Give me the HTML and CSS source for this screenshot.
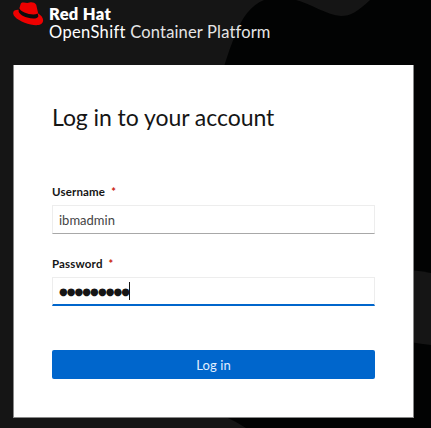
FILE: index.html
```html
<!DOCTYPE html>
<html lang="en">
<head>
<meta charset="utf-8">
<title>Log in</title>
<link rel="stylesheet" href="styles.css">
</head>
<body>
<svg class="backdrop" viewBox="0 0 431 428" aria-hidden="true">
  <path fill="#020303" d="M264 0C251 5 242 18 236 33C229 50 226 60 220 80V417H226Q237 422 246 428H431V0H370C357 12 351 16 341 16C327 15 311 4 296 0Z"/>
  <path fill="#151515" d="M410 270Q421 271 431 273V345Q421 344 410 342Z"/>
</svg>
<header class="brand">
  <svg class="hat" viewBox="0 0 31 24" aria-hidden="true">
    <path fill="#e00" d="M7.5 2.4C8 .8 9.1.2 10.8.6L14.3.9L17.6.3C19.5.1 22.4.9 23.2 2.8L25.2 11.5C28.5 13.3 30.6 16.5 30 19.3C29.2 23.4 23.5 24 17.6 22.4C9.5 20.6 1 16.2.2 11.7C-.3 8.8 2.5 7.6 5.9 7.9Z"/>
    <path fill="#0c0c0c" d="M6.2 6.2C7.4 10 19.5 14.3 24.7 11.5L25.4 14.2C24.5 17 19.6 17.1 14.2 15.5C9.3 14 5.2 11 5.6 8.4Z"/>
  </svg>
  <div class="brand-text">
    <div class="company">Red Hat</div>
    <div class="product"><span class="openshift">OpenShift</span> <span class="platform">Container Platform</span></div>
  </div>
</header>
<main class="card">
  <h1><span>Log in to your account</span></h1>
  <form>
    <div class="field">
      <div class="label"><span class="username-label">Username</span><span class="required">*</span></div>
      <div class="control"><span class="username">ibmadmin</span></div>
    </div>
    <div class="field">
      <div class="label"><span class="password-label">Password</span><span class="required">*</span></div>
      <div class="control focused"><span class="dots">●●●●●●●●●</span><span class="caret"></span></div>
    </div>
    <button type="button"><span>Log in</span></button>
  </form>
</main>
</body>
</html>
```

FILE: styles.css
```css
* { box-sizing: border-box; }
body {
  margin: 0;
  width: 431px;
  height: 428px;
  overflow: hidden;
  background: #151515;
  color: #151515;
  font-family: Lato, "Liberation Sans", sans-serif;
  font-variant-ligatures: none;
}
.backdrop { position: absolute; inset: 0; z-index: -1; width: 431px; height: 428px; }
.brand { display: flex; height: 65px; padding: 2px 0 0 13px; color: #fff; }
.hat { width: 31px; height: 24px; }
.brand-text { margin-left: 5px; padding-top: 3px; white-space: nowrap; }
.company { font: 800 16.5px/18px Lato, sans-serif; letter-spacing: .35px; }
.product { font-size: 16.5px; line-height: 19px; letter-spacing: .16px; }
.openshift { letter-spacing: .35px; }
.platform { color: #e5e5e5; }
.card {
  width: 401px;
  height: 353px;
  margin-left: 13px;
  padding: 36px 39px 0 38px;
  background: #fff;
  border: 1px solid #888;
  border-top-width: 0;
}
h1 { margin: 0; height: 81px; font-size: 23px; font-weight: 400; line-height: 32px; white-space: nowrap; letter-spacing: -.06px; }
form { width: 323px; }
.field { height: 72px; }
.label { display: flex; gap: 6px; height: 23px; font-size: 11.5px; font-weight: 700; line-height: 19px; letter-spacing: .16px; }
.required { color: #c9190b; font-size: 11px; }
.control {
  display: flex;
  align-items: center;
  height: 29px;
  padding-left: 6px;
  border: 1px solid #ededed;
  border-bottom-color: #a8a8a8;
  font-size: 13px;
}
.username { color: #444; }
.focused { border-bottom: 2px solid #06c; }
.dots { padding-top: 2px; font: 10px/12px "DejaVu Sans", sans-serif; letter-spacing: -.95px; }
.caret { width: 1px; height: 18px; background: #151515; }
button {
  display: block;
  width: 323px;
  height: 29px;
  margin-top: 24px;
  padding: 0;
  border: 0;
  border-radius: 2px;
  background: #06c;
  color: #e0efff;
  font: 13px/30px Lato, sans-serif;
  letter-spacing: .1px;
}
```
